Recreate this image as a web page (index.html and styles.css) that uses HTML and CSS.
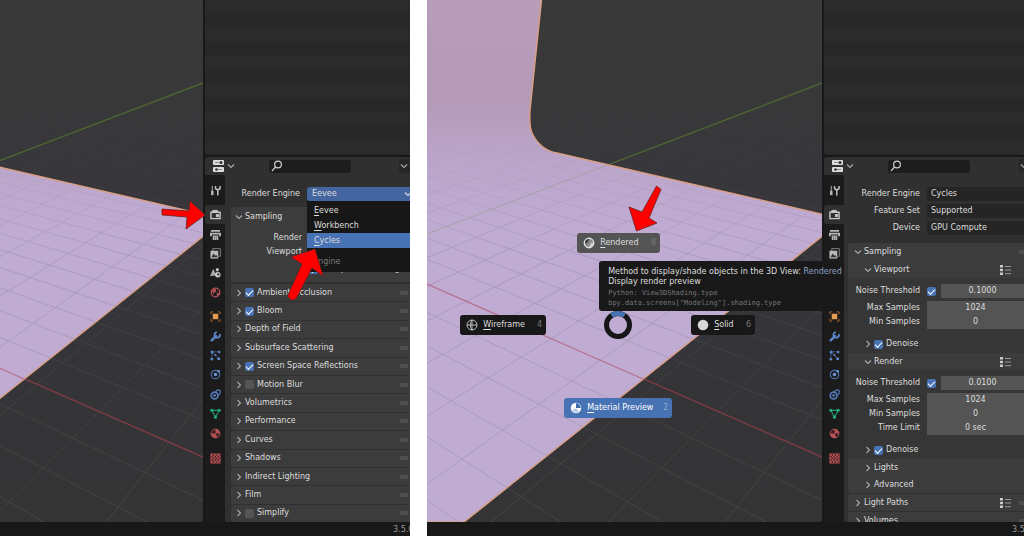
FILE: index.html
```html
<!DOCTYPE html>
<html lang="en">
<head>
<meta charset="utf-8">
<title>Render engine and viewport shading</title>
<link rel="stylesheet" href="styles.css">
</head>
<body>
<svg class="sprite" width="0" height="0" aria-hidden="true">
  <defs>
    <linearGradient id="floor" x1="0" y1="0" x2="0" y2="1">
      <stop offset="0" stop-color="#b79db9"/><stop offset=".2" stop-color="#b59ab8"/>
      <stop offset=".31" stop-color="#bba5ca"/><stop offset=".45" stop-color="#c0abd3"/><stop offset="1" stop-color="#c0abd2"/>
    </linearGradient>
    <linearGradient id="space" x1="0" y1="0" x2="0" y2="1">
      <stop offset="0" stop-color="#393939"/><stop offset=".2" stop-color="#38383a"/><stop offset=".38" stop-color="#37353b"/>
      <stop offset=".6" stop-color="#353438"/><stop offset="1" stop-color="#343435"/>
    </linearGradient>
    <linearGradient id="fade" gradientUnits="userSpaceOnUse" x1="0" y1="60" x2="0" y2="522">
      <stop offset="0" stop-color="#000"/><stop offset=".2" stop-color="#333"/><stop offset=".5" stop-color="#aaa"/><stop offset="1" stop-color="#fff"/>
    </linearGradient>
    <linearGradient id="fadeFloor" gradientUnits="userSpaceOnUse" x1="0" y1="145" x2="0" y2="260">
      <stop offset="0" stop-color="#000"/><stop offset="1" stop-color="#fff"/>
    </linearGradient>
    <mask id="m1" maskUnits="userSpaceOnUse" x="400" y="0" width="430" height="560"><rect x="400" width="430" height="560" fill="url(#fade)"/></mask>
    <mask id="m2" maskUnits="userSpaceOnUse" x="400" y="0" width="430" height="560"><rect x="400" width="430" height="560" fill="url(#fadeFloor)"/></mask>
    <path id="plane" d="M420-5H542L530 110Q529 126 532 133Q540 150 557 153L830 216V230L464 522H420Z"/>
    <clipPath id="onPlane"><use href="#plane"/></clipPath>
    <g id="grid" fill="none">
      <path d="M-346-55L458 522M-346-55L561 522M-346-55L663 522M-346-55L766 522M-346-55L868 522M-346-55L1073 522M-346-55L1176 522M-346-55L1278 522M-346-55L1381 522M-346-55L1483 522M-346-55L1586 522M-346-55L1688 522M-346-55L1791 522M-346-55L1893 522M-346-55L1996 522M-346-55L2098 522M-346-55L2201 522M-346-55L2303 522M-346-55L2406 522M-346-55L2508 522M-346-55L2611 522M-346-55L2713 522"/>
      <path d="M1182-55L725 522M1182-55L608 522M1182-55L491 522M1182-55L374 522M1182-55L257 522M1182-55L140 522M1182-55L23 522M1182-55L-94 522M1182-55L-211 522M1182-55L-445 522M1182-55L-562 522M1182-55L-679 522M1182-55L-796 522M1182-55L-913 522M1182-55L-1030 522M1182-55L-1147 522"/>
    </g>
    <symbol id="scene3d" viewBox="427 0 395 522" preserveAspectRatio="xMaxYMin slice">
      <rect x="400" width="430" height="560" fill="url(#space)"/>
      <g mask="url(#m1)"><use href="#grid" stroke="#454547"/></g>
      <path d="M427 234L822 83" stroke="#4d6432" stroke-width="1.400" fill="none"/>
      <path d="M427 284L822 457" stroke="#7d3c43" stroke-width="1.400" fill="none"/>
      <use href="#plane" fill="url(#floor)" stroke="#d99f83" stroke-width="1.500"/>
      <g clip-path="url(#onPlane)">
        <g mask="url(#m2)"><use href="#grid" stroke="#a897b8" stroke-width=".8"/></g>
        <path d="M427 234L615 162" stroke="#a6a0a6" fill="none"/>
        <path d="M427 284L700 404" stroke="#b5708c" stroke-width="1.200" fill="none"/>
      </g>
    </symbol>

    <symbol id="i-editor" viewBox="0 0 12 12"><rect x="0" y="0" width="11" height="5" rx="1" fill="#ddd"/><rect x="0" y="7" width="11" height="5" rx="1" fill="#ddd"/><circle cx="8" cy="2.500" r="1.500" fill="#303030"/><circle cx="3.500" cy="9.500" r="1.300" fill="#303030"/><path d="M2 2.500H6M5 9.500H9" stroke="#888"/></symbol>
    <symbol id="i-search" viewBox="0 0 12 12"><g fill="none" stroke="#ccc" stroke-width="1.200"><circle cx="7" cy="4.500" r="3.400"/><path d="M4.600 7L1 11"/></g></symbol>
    <symbol id="i-down" viewBox="0 0 8 8"><path d="M1 2.500L4 5.500L7 2.500" fill="none" stroke="currentColor" stroke-width="1.100"/></symbol>
    <symbol id="i-right" viewBox="0 0 8 8"><path d="M2.500 1L5.500 4L2.500 7" fill="none" stroke="currentColor" stroke-width="1.100"/></symbol>
    <symbol id="i-list" viewBox="0 0 12 10"><path d="M0 0H3V2.500H0ZM0 3.800H3V6.300H0ZM0 7.500H3V10H0Z" fill="#ccc"/><path d="M5 1.500H11M5 5H11M5 8.700H11" stroke="#999"/></symbol>
    <symbol id="i-grip" viewBox="0 0 8 4"><path d="M0 1H8M0 3H8" stroke="#777" stroke-width=".8" stroke-dasharray="1.600 .5"/></symbol>

    <symbol id="i-tool" viewBox="0 0 12 12"><g fill="none" stroke="#bbb"><path d="M2.500 1V6" stroke-width="1"/><path d="M2.500 6V11" stroke-width="2.600"/><path d="M6 1V3Q6 5 8.500 5Q11 5 11 3V1M8.500 5V11.500" stroke-width="1.700"/></g></symbol>
    <symbol id="i-render" viewBox="0 0 12 12"><path d="M1 3.500H11V10.500H1Z" fill="none" stroke="#c8c8c8" stroke-width="1.500"/><path d="M3 3.500V1.500H8V3.500M7 6H9.500V8.500H7Z" fill="#c8c8c8" stroke="#c8c8c8"/></symbol>
    <symbol id="i-output" viewBox="0 0 12 12"><path d="M1 1H11V3H1ZM0 4H12V8H10V6H2V8H0ZM3 7H9V12H3Z" fill="#b9b9b9"/><path d="M5 8V12M7 8V12" stroke="#555" stroke-width=".7"/></symbol>
    <symbol id="i-layer" viewBox="0 0 12 12"><path d="M3 .7H11.300V9H3Z" fill="none" stroke="#888" stroke-width="1"/><path d="M.5 3H9V11.500H.5Z" fill="#bbb"/><path d="M1.500 10L4 6L6 8.500L7 7.500L8.500 10Z" fill="#333"/></symbol>
    <symbol id="i-scene" viewBox="0 0 12 12"><path d="M3.500 2L7 9L0 10Z" fill="#aaa"/><circle cx="8.500" cy="8.500" r="3" fill="#ccc"/><circle cx="8" cy="3" r="1.800" fill="#bbb"/><circle cx="9" cy="8" r="1.300" fill="#333"/></symbol>
    <symbol id="i-world" viewBox="0 0 12 12"><circle cx="6" cy="6" r="4.700" fill="none" stroke="#b45157" stroke-width="1.400"/><path d="M2 3L6 2L7 5L4 6.500L4 9ZM8 6L10 7L8 10L7 8Z" fill="#b45157"/></symbol>
    <symbol id="i-object" viewBox="0 0 12 12"><rect x="3" y="3" width="6" height="6" fill="#e39a52"/><path d="M1 3.500V1H3.500M8.500 1H11V3.500M11 8.500V11H8.500M3.500 11H1V8.500" fill="none" stroke="#a86b34"/></symbol>
    <symbol id="i-modifier" viewBox="0 0 12 12"><path d="M1.800 10.200L6.500 5.500" stroke="#5d86c8" stroke-width="2.600" stroke-linecap="round"/><path d="M10.700 3.300A3 3 0 1 1 7.500 1.300" fill="none" stroke="#5d86c8" stroke-width="2"/></symbol>
    <symbol id="i-particle" viewBox="0 0 12 12"><path d="M2 2V10M2 2H10M2 2L10 10" stroke="#3c5580" stroke-width="1"/><circle cx="2.300" cy="2.300" r="1.700" fill="#5d86c8"/><circle cx="10" cy="2.300" r="1.400" fill="#5d86c8"/><circle cx="2" cy="10" r="1.500" fill="#5d86c8"/><circle cx="9.500" cy="9.500" r="1.700" fill="#5d86c8"/><circle cx="6" cy="5.500" r="1.200" fill="#5d86c8"/></symbol>
    <symbol id="i-physics" viewBox="0 0 12 12"><circle cx="6" cy="6" r="4.600" fill="none" stroke="#4a6dac" stroke-width="1.300"/><circle cx="6" cy="6" r="1.900" fill="#6d93d8"/><circle cx="9.500" cy="2.500" r="1.400" fill="#6d93d8"/></symbol>
    <symbol id="i-constraint" viewBox="0 0 12 12"><circle cx="5" cy="7" r="3.700" fill="none" stroke="#5478b8" stroke-width="1.900"/><circle cx="5" cy="7" r="1.300" fill="#6d93d8"/><path d="M6 3Q8 0 11 1.500Q12 5 9 7" fill="none" stroke="#5478b8" stroke-width="1.300"/></symbol>
    <symbol id="i-data" viewBox="0 0 12 12"><path d="M2 2.500H10L6 10Z" fill="none" stroke="#1f9468" stroke-width="1.300"/><g fill="#26ad7a"><circle cx="2" cy="2.500" r="1.700"/><circle cx="10" cy="2.500" r="1.700"/><circle cx="6" cy="10" r="1.700"/></g></symbol>
    <symbol id="i-material" viewBox="0 0 12 12"><circle cx="6" cy="6" r="4.800" fill="#b64f55" stroke="#d0686c" stroke-width=".8"/><path d="M6 6V1.500A4.500 4.500 0 0 0 1.500 6ZM6 6H10.500A4.500 4.500 0 0 1 8 10Z" fill="#3a2022"/></symbol>
    <symbol id="i-texture" viewBox="0 0 12 12"><rect x="1" y="1" width="10" height="10" fill="#4a2527" stroke="#b65055" stroke-width="1"/><path d="M1 2.500H11M1 6H11M1 9.500H11" stroke="#c4595e" stroke-width="1.600" stroke-dasharray="1.800 1.600"/><path d="M3 4.200H11M3 7.800H11" stroke="#c4595e" stroke-width="1.600" stroke-dasharray="1.800 1.600"/></symbol>

    <symbol id="i-wire" viewBox="0 0 12 12"><g fill="none" stroke="#c8c8c8" stroke-width=".9"><circle cx="6" cy="6" r="5"/><path d="M1 6H11M6 1V11M6 1Q2.500 6 6 11"/></g></symbol>
    <symbol id="i-solid" viewBox="0 0 12 12"><circle cx="6" cy="6" r="5.300" fill="#d6d6d6"/></symbol>
    <symbol id="i-preview" viewBox="0 0 12 12"><circle cx="6" cy="6" r="5.200" fill="#fff"/><path d="M6 6V1.300A4.700 4.700 0 0 1 10.700 6Z" fill="#3e67a8"/><path d="M6 6L2 8.500A4.700 4.700 0 0 0 9 9.700Z" fill="#b9cbe8"/></symbol>
    <symbol id="i-rendered" viewBox="0 0 12 12"><circle cx="6" cy="6" r="4.700" fill="#8a8a8a" stroke="#e2e2e2" stroke-width="1.400"/><path d="M6 2A4 4 0 0 0 2 6Q3 7 4.500 5.500T6 2Z" fill="#3e3e3e"/><path d="M10 6A4 4 0 0 1 5 10Q8 9 8 6Z" fill="#ddd"/></symbol>
  </defs>
</svg>

<main class="compare">
  <section class="shot shot-engine" aria-label="Choosing the render engine">
    <div class="viewport"><svg class="scene" aria-hidden="true"><use href="#scene3d"/></svg></div>
    <aside class="side">
      <div class="outliner"></div>
      <header class="bar">
        <button class="editor" aria-label="Editor type"><svg class="ic"><use href="#i-editor"/></svg><svg class="chev"><use href="#i-down"/></svg></button>
        <label class="search"><svg class="ic"><use href="#i-search"/></svg><input type="text" aria-label="Search"></label>
        <button class="options" aria-label="Options"><svg class="chev"><use href="#i-down"/></svg></button>
      </header>
      <div class="props">
        <nav class="tabs" aria-label="Properties tabs">
          <button class="tab first" aria-label="Tool"><svg class="ic"><use href="#i-tool"/></svg></button>
          <div class="group g5">
            <button class="tab on" aria-label="Render"><svg class="ic"><use href="#i-render"/></svg></button>
            <button class="tab" aria-label="Output"><svg class="ic"><use href="#i-output"/></svg></button>
            <button class="tab" aria-label="View layer"><svg class="ic"><use href="#i-layer"/></svg></button>
            <button class="tab" aria-label="Scene"><svg class="ic"><use href="#i-scene"/></svg></button>
            <button class="tab" aria-label="World"><svg class="ic"><use href="#i-world"/></svg></button>
          </div>
          <div class="group g7">
            <button class="tab" aria-label="Object"><svg class="ic"><use href="#i-object"/></svg></button>
            <button class="tab" aria-label="Modifiers"><svg class="ic"><use href="#i-modifier"/></svg></button>
            <button class="tab" aria-label="Particles"><svg class="ic"><use href="#i-particle"/></svg></button>
            <button class="tab" aria-label="Physics"><svg class="ic"><use href="#i-physics"/></svg></button>
            <button class="tab" aria-label="Constraints"><svg class="ic"><use href="#i-constraint"/></svg></button>
            <button class="tab" aria-label="Data"><svg class="ic"><use href="#i-data"/></svg></button>
            <button class="tab" aria-label="Material"><svg class="ic"><use href="#i-material"/></svg></button>
          </div>
          <button class="tab" aria-label="Texture"><svg class="ic"><use href="#i-texture"/></svg></button>
        </nav>
        <div class="panels">
          <div class="engine-row">
            <label for="engine">Render Engine</label>
            <div class="drop">
              <select id="engine" class="open"><option>Eevee</option></select>
              <svg class="chev"><use href="#i-down"/></svg>
              <div class="menu">
                <button><u>E</u>evee</button>
                <button><u>W</u>orkbench</button>
                <button class="hot"><u>C</u>ycles</button>
                <span class="menu-title">Engine</span>
              </div>
            </div>
          </div>
          <div class="panel sampling">
            <h2><svg class="chev"><use href="#i-down"/></svg>Sampling</h2>
            <p>Render</p>
            <p>Viewport</p>
            <label class="denoise"><input type="checkbox" checked>Viewport Denoising</label>
          </div>
          <div class="list">
            <div class="panel row"><svg class="chev"><use href="#i-right"/></svg><label><input type="checkbox" checked>Ambient Occlusion</label><svg class="grip"><use href="#i-grip"/></svg></div>
            <div class="panel row"><svg class="chev"><use href="#i-right"/></svg><label><input type="checkbox" checked>Bloom</label><svg class="grip"><use href="#i-grip"/></svg></div>
            <div class="panel row"><svg class="chev"><use href="#i-right"/></svg>Depth of Field<svg class="grip"><use href="#i-grip"/></svg></div>
            <div class="panel row"><svg class="chev"><use href="#i-right"/></svg>Subsurface Scattering<svg class="grip"><use href="#i-grip"/></svg></div>
            <div class="panel row"><svg class="chev"><use href="#i-right"/></svg><label><input type="checkbox" checked>Screen Space Reflections</label><svg class="grip"><use href="#i-grip"/></svg></div>
            <div class="panel row"><svg class="chev"><use href="#i-right"/></svg><label><input type="checkbox">Motion Blur</label><svg class="grip"><use href="#i-grip"/></svg></div>
            <div class="panel row"><svg class="chev"><use href="#i-right"/></svg>Volumetrics<svg class="grip"><use href="#i-grip"/></svg></div>
            <div class="panel row"><svg class="chev"><use href="#i-right"/></svg>Performance<svg class="grip"><use href="#i-grip"/></svg></div>
            <div class="panel row"><svg class="chev"><use href="#i-right"/></svg>Curves<svg class="grip"><use href="#i-grip"/></svg></div>
            <div class="panel row"><svg class="chev"><use href="#i-right"/></svg>Shadows<svg class="grip"><use href="#i-grip"/></svg></div>
            <div class="panel row"><svg class="chev"><use href="#i-right"/></svg>Indirect Lighting<svg class="grip"><use href="#i-grip"/></svg></div>
            <div class="panel row"><svg class="chev"><use href="#i-right"/></svg>Film<svg class="grip"><use href="#i-grip"/></svg></div>
            <div class="panel row"><svg class="chev"><use href="#i-right"/></svg><label><input type="checkbox">Simplify</label><svg class="grip"><use href="#i-grip"/></svg></div>
          </div>
        </div>
      </div>
    </aside>
    <footer class="status"><span>3.5.0</span></footer>
    <svg class="arrows" viewBox="0 0 410 536" preserveAspectRatio="xMaxYMin slice" aria-hidden="true">
      <path d="M162 209V215L187 217L186 229L205 215L190 201L189 211Z"/>
      <path d="M315 249L291 257L302 264L288 295Q288 299 292 300Q296 300 297 297L312 268L323 276Z"/>
    </svg>
  </section>

  <section class="shot shot-shading" aria-label="Choosing the viewport shading">
    <div class="viewport">
      <svg class="scene" aria-hidden="true"><use href="#scene3d"/></svg>
      <div class="pie">
        <button class="slice s-rendered"><svg class="ic"><use href="#i-rendered"/></svg><span><u>R</u>endered</span><kbd>8</kbd></button>
        <button class="slice s-wire"><svg class="ic"><use href="#i-wire"/></svg><span><u>W</u>ireframe</span><kbd>4</kbd></button>
        <button class="slice s-solid"><svg class="ic"><use href="#i-solid"/></svg><span><u>S</u>olid</span><kbd>6</kbd></button>
        <button class="slice s-preview"><svg class="ic"><use href="#i-preview"/></svg><span><u>M</u>aterial Preview</span><kbd>2</kbd></button>
        <svg class="ring" viewBox="0 0 28 28" aria-hidden="true"><circle cx="14" cy="14" r="11.500" fill="none" stroke="#161618" stroke-width="5"/><path d="M7.500 4.500A11.500 11.500 0 0 1 20.500 4.500" fill="none" stroke="#4772b3" stroke-width="5"/></svg>
        <div class="tip" role="tooltip">
          <p>Method to display/shade objects in the 3D View: <em>Rendered</em></p>
          <p>Display render preview</p>
          <pre>Python: View3DShading.type
bpy.data.screens["Modeling"].shading.type</pre>
        </div>
        <svg class="pointer" viewBox="0 0 34 48" aria-hidden="true"><path d="M28.500 1L33 4.500L21 33L29 38L8.500 46L1 22L14 27Z"/></svg>
      </div>
    </div>
    <aside class="side">
      <div class="outliner"></div>
      <header class="bar">
        <button class="editor" aria-label="Editor type"><svg class="ic"><use href="#i-editor"/></svg><svg class="chev"><use href="#i-down"/></svg></button>
        <label class="search"><svg class="ic"><use href="#i-search"/></svg><input type="text" aria-label="Search"></label>
        <button class="options" aria-label="Options"><svg class="chev"><use href="#i-down"/></svg></button>
      </header>
      <div class="props">
        <nav class="tabs" aria-label="Properties tabs">
          <button class="tab first" aria-label="Tool"><svg class="ic"><use href="#i-tool"/></svg></button>
          <div class="group g5">
            <button class="tab on" aria-label="Render"><svg class="ic"><use href="#i-render"/></svg></button>
            <button class="tab" aria-label="Output"><svg class="ic"><use href="#i-output"/></svg></button>
            <button class="tab" aria-label="View layer"><svg class="ic"><use href="#i-layer"/></svg></button>
            <button class="tab" aria-label="Scene"><svg class="ic"><use href="#i-scene"/></svg></button>
            <button class="tab" aria-label="World"><svg class="ic"><use href="#i-world"/></svg></button>
          </div>
          <div class="group g7">
            <button class="tab" aria-label="Object"><svg class="ic"><use href="#i-object"/></svg></button>
            <button class="tab" aria-label="Modifiers"><svg class="ic"><use href="#i-modifier"/></svg></button>
            <button class="tab" aria-label="Particles"><svg class="ic"><use href="#i-particle"/></svg></button>
            <button class="tab" aria-label="Physics"><svg class="ic"><use href="#i-physics"/></svg></button>
            <button class="tab" aria-label="Constraints"><svg class="ic"><use href="#i-constraint"/></svg></button>
            <button class="tab" aria-label="Data"><svg class="ic"><use href="#i-data"/></svg></button>
            <button class="tab" aria-label="Material"><svg class="ic"><use href="#i-material"/></svg></button>
          </div>
          <button class="tab" aria-label="Texture"><svg class="ic"><use href="#i-texture"/></svg></button>
        </nav>
        <div class="panels">
          <div class="settings">
            <label for="r-engine">Render Engine</label><select id="r-engine"><option>Cycles</option></select>
            <label for="r-feature">Feature Set</label><select id="r-feature"><option>Supported</option></select>
            <label for="r-device">Device</label><select id="r-device"><option>GPU Compute</option></select>
          </div>
          <div class="panel stack">
            <h2 class="row"><svg class="chev"><use href="#i-down"/></svg>Sampling<svg class="grip"><use href="#i-grip"/></svg></h2>
            <h3 class="row"><svg class="chev"><use href="#i-down"/></svg>Viewport<svg class="list-ic"><use href="#i-list"/></svg></h3>
            <div class="body">
              <div class="field noise"><label for="v-noise">Noise Threshold</label><input type="checkbox" checked aria-label="Use viewport noise threshold"><input type="text" id="v-noise" value="0.1000"></div>
              <div class="field"><label for="v-max">Max Samples</label><input type="text" id="v-max" value="1024"></div>
              <div class="field"><label for="v-min">Min Samples</label><input type="text" id="v-min" value="0"></div>
              <div class="sub"><svg class="chev"><use href="#i-right"/></svg><label><input type="checkbox" checked>Denoise</label></div>
            </div>
            <h3 class="row"><svg class="chev"><use href="#i-down"/></svg>Render<svg class="list-ic"><use href="#i-list"/></svg></h3>
            <div class="body">
              <div class="field noise"><label for="f-noise">Noise Threshold</label><input type="checkbox" checked aria-label="Use render noise threshold"><input type="text" id="f-noise" value="0.0100"></div>
              <div class="field"><label for="f-max">Max Samples</label><input type="text" id="f-max" value="1024"></div>
              <div class="field"><label for="f-min">Min Samples</label><input type="text" id="f-min" value="0"></div>
              <div class="field"><label for="f-time">Time Limit</label><input type="text" id="f-time" value="0 sec"></div>
              <div class="sub"><svg class="chev"><use href="#i-right"/></svg><label><input type="checkbox" checked>Denoise</label></div>
            </div>
            <h3 class="row"><svg class="chev"><use href="#i-right"/></svg>Lights</h3>
            <h3 class="row"><svg class="chev"><use href="#i-right"/></svg>Advanced</h3>
          </div>
          <div class="panel row tall"><svg class="chev"><use href="#i-right"/></svg>Light Paths<svg class="list-ic"><use href="#i-list"/></svg><svg class="grip"><use href="#i-grip"/></svg></div>
          <div class="panel row tall"><svg class="chev"><use href="#i-right"/></svg>Volumes<svg class="grip"><use href="#i-grip"/></svg></div>
        </div>
      </div>
    </aside>
    <footer class="status"><span>3.5.0</span></footer>
  </section>
</main>
</body>
</html>
```
FILE: styles.css
```css
* { box-sizing: border-box; }

body {
  margin: 0;
  background: #fff;
  color: #dedede;
  font: 8px/14px "DejaVu Sans", sans-serif;
}

button, input, select {
  margin: 0;
  padding: 0;
  border: 0;
  background: none;
  color: inherit;
  font: inherit;
}

h2, h3, p, pre { margin: 0; font: inherit; }
svg { display: block; flex: none; }
u { text-underline-offset: 2px; }
.sprite { position: absolute; }

.compare {
  display: grid;
  grid-template-columns: 410fr 597fr;
  gap: 17px;
  height: 100vh;
  overflow: hidden;
}

.shot {
  position: relative;
  display: grid;
  grid-template-rows: minmax(0, 1fr) 14px;
  min-width: 0;
  overflow: hidden;
  background: #181818;
}
.shot-engine { grid-template-columns: minmax(0, 1fr) 207px; }
.shot-shading { grid-template-columns: minmax(0, 1fr) 202px; }

.viewport { position: relative; background: #353537; border-radius: 0 0 3px 0; }
.scene { width: 100%; height: 100%; border-radius: 0 0 3px 0; }

.side {
  display: flex;
  flex-direction: column;
  min-width: 0;
  min-height: 0;
  padding-left: 2px;
}
.outliner {
  flex: none;
  height: 155px;
  margin-bottom: 2px;
  background: repeating-linear-gradient(#2b2b2b 0 14px, #282828 14px 28px);
  border-radius: 0 0 0 3px;
}

.bar {
  display: flex;
  align-items: center;
  flex: none;
  height: 18px;
  padding-left: 8px;
  background: #303030;
  border-radius: 3px 0 0 0;
}
.ic { width: 12px; height: 12px; }
.chev { width: 8px; height: 8px; color: #aaa; }
.editor { display: flex; align-items: center; gap: 2px; width: 56px; }
.search {
  display: flex;
  align-items: center;
  width: 82px;
  height: 13px;
  padding-left: 2px;
  background: #1d1d1d;
  border-radius: 3px;
}
.search input { width: 60px; }
.options {
  width: 20px;
  height: 14px;
  margin: 0 -9px 0 auto;
  padding-left: 1px;
  background: #272727;
  border-radius: 3px;
}
.shot-shading .options { margin-right: -15px; }

.props { display: flex; flex: 1; min-height: 0; }
.tabs { flex: none; width: 20px; background: #1b1b1b; }
.group { display: flex; flex-direction: column; margin-bottom: 5px; }
.g5 { height: 97px; }
.g7 { height: 136px; }
.tab {
  display: flex;
  flex: 1;
  align-items: center;
  justify-content: center;
  width: 20px;
  height: 20px;
}
.tab .ic { width: 11px; height: 11px; }
.first { height: 30px; }
.on { background: #303030; border-radius: 3px 0 0 3px; }

.panels {
  display: flex;
  flex: 1;
  flex-direction: column;
  min-width: 0;
  overflow: hidden;
  background: #303030;
}
.shot-engine .panels { padding-left: 6px; }
.shot-shading .panels { padding-left: 4px; }
.panel { background: #3c3c3c; border-radius: 3px 0 0 3px; }

.engine-row {
  display: grid;
  grid-template-columns: 69px 1fr;
  gap: 7px;
  padding: 12px 0 6px;
  text-align: right;
  white-space: nowrap;
}
.drop { position: relative; text-align: left; }
select { display: block; width: 100%; height: 14px; appearance: none; background: #252525; padding-left: 4px; border-radius: 3px 0 0 3px; }
select.open { background: #4465a0; padding-left: 5px; }
.drop > .chev { position: absolute; top: 3px; right: -2px; color: #ddd; }
.menu {
  position: absolute;
  z-index: 1;
  top: 14px;
  left: 0;
  right: 0;
  display: flex;
  flex-direction: column;
  height: 71px;
  padding-top: 2px;
  background: #171717;
}
.menu button { height: 15px; padding-left: 7px; text-align: left; line-height: 14px; }
.menu .hot { background: #4772b3; }
.menu-title { padding: 7px 0 0 6px; color: #777; }

.sampling { height: 75px; margin-bottom: 2px; }
.sampling h2 { display: flex; align-items: center; gap: 2px; height: 20px; padding: 0 0 0 4px; margin-bottom: 4px; }
.sampling p { width: 71px; text-align: right; }
.denoise { display: flex; align-items: center; gap: 4px; padding: 3px 0 0 78px; white-space: nowrap; }

.list { display: flex; flex: 1; flex-direction: column; gap: 1px; min-height: 0; }
.list .panel { flex: 1; }
.row {
  display: flex;
  align-items: center;
  gap: 2px;
  padding: 0 2px 0 4px;
  white-space: nowrap;
}
.row label, .sub label { display: flex; align-items: center; gap: 3px; }
.grip { width: 8px; height: 4px; margin-left: auto; }

input[type="checkbox"] {
  flex: none;
  width: 9px;
  height: 9px;
  appearance: none;
  background: #545454;
  border-radius: 2px;
}
input[type="checkbox"]:checked { background: #4772b3; }
input[type="checkbox"]:checked::after {
  content: "";
  display: block;
  width: 6px;
  height: 3px;
  margin: 2px 0 0 1px;
  border: solid #fff;
  border-width: 0 0 1px 1px;
  transform: rotate(-45deg);
}

.settings {
  display: grid;
  grid-template-columns: 72px 1fr;
  gap: 3px 7px;
  padding: 12px 0 8px;
  text-align: right;
}
.shot-shading .row { padding-left: 6px; }
.stack { flex: none; margin-bottom: 1px; overflow: hidden; }
.stack h2 { height: 18px; }
.stack h3 { height: 17px; }
.shot-shading h3.row { padding-left: 16px; }
.list-ic { width: 12px; height: 10px; margin-left: auto; margin-right: 10px; }
.list-ic + .grip { margin-left: 0; }
.shot-shading .row:has(.list-ic + .grip) .list-ic { margin-right: 5px; }
.shot-shading .grip { margin-right: -5px; }
.body { padding: 6px 0 0; background: #363636; }
.field {
  display: grid;
  grid-template-columns: 72px 1fr;
  gap: 7px;
  text-align: right;
}
.field input[type="text"] { width: 100%; height: 14px; background: #545454; text-align: center; }
.noise { grid-template-columns: 72px 11px 1fr; gap: 5px; margin-bottom: 3px; align-items: center; }
.noise input[type="checkbox"] { justify-self: end; }
.noise label { white-space: nowrap; }
.sub { display: flex; align-items: center; gap: 2px; padding: 8px 0 2px 16px; }
.tall { flex: none; height: 17px; margin-bottom: 1px; }

.status {
  grid-column: 1 / -1;
  display: flex;
  justify-content: flex-end;
  background: #181818;
  color: #999;
}
.status span { width: 17px; padding-top: 1px; overflow: hidden; }
.shot-shading .status span { width: 12px; }

.arrows { position: absolute; inset: 0; width: 100%; height: 100%; z-index: 2; }
.arrows path, .pointer path { fill: #fe0000; stroke: #6d2020; stroke-width: .8; }

/* Pie menu, placed round the cursor on the canvas */
.pie { position: absolute; top: 325px; left: 48.4%; z-index: 2; width: 0; height: 0; }
.slice {
  position: absolute;
  display: flex;
  align-items: center;
  height: 20px;
  padding: 0 4px 0 6px;
  background: #181818;
  border-radius: 3px;
  white-space: nowrap;
}
.slice span { margin-left: 5px; }
.slice kbd { margin-left: auto; font: inherit; color: #777; }
.s-rendered { width: 83px; top: -92px; left: -41px; background: #545454; }
.s-wire { width: 86px; top: -10px; left: -158px; }
.s-solid { width: 64px; top: -10px; left: 73px; }
.s-preview { width: 108px; top: 73px; left: -54px; background: #4772b3; color: #fff; }
.s-preview kbd { color: #8ea9d3; }
.ring { position: absolute; top: -14px; left: -14px; width: 28px; height: 28px; }
.tip {
  position: absolute;
  top: -64px;
  left: -19px;
  width: 245px;
  height: 50px;
  padding: 6px 0 0 9px;
  background: #191919;
  border-radius: 3px;
  line-height: 10px;
  white-space: nowrap;
}
.tip em { font-style: normal; color: #8fa3c4; }
.tip pre { margin-top: 1px; color: #777; font-family: "DejaVu Sans Mono", monospace; font-size: 7px; }
.pointer { position: absolute; top: -140px; left: 10px; width: 34px; height: 48px; }
```
